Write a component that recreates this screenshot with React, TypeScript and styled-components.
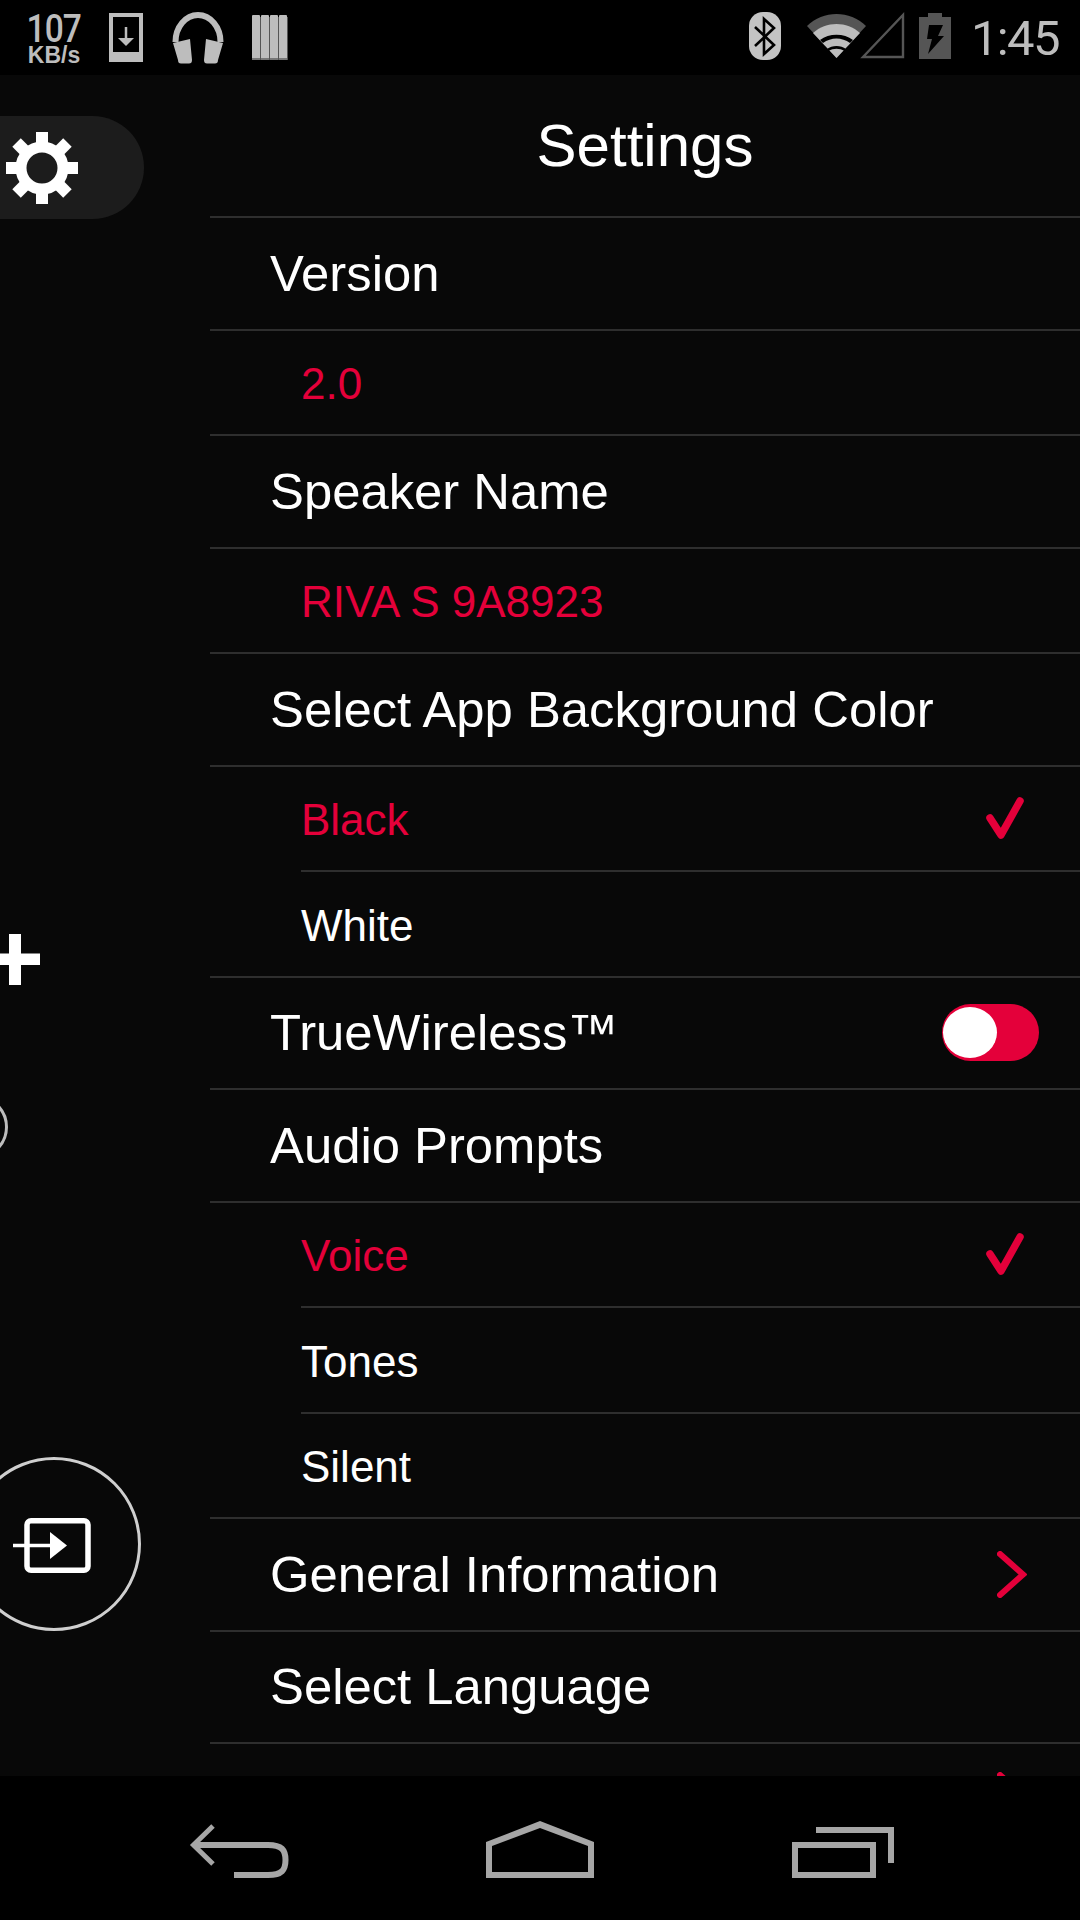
import React from "react";
import styled, { createGlobalStyle } from "styled-components";

const Global = createGlobalStyle`
  html, body { margin: 0; padding: 0; background: #000; }
  #root { width: 1080px; height: 1920px; }
`;

const RED = "#e4003a";
const LINE = "#2e2e2e";
const GREY = "#bdbdbd";
const NAV = "#a6a6a6";

const Phone = styled.div`
  width: 1080px; height: 1920px; display: flex; flex-direction: column;
  background: #000; overflow: hidden;
  font-family: "Liberation Sans", Arial, sans-serif;
`;
const StatusBar = styled.div`
  height: 75px; flex: none; display: flex; justify-content: space-between; background: #000; color: ${GREY};
`;
const StatusGroup = styled.div`display: flex; align-items: flex-start;`;
const Speed = styled.div`
  width: 54px; margin: 14px 0 0 27px; display: flex; flex-direction: column; align-items: center;
`;
const SpeedValue = styled.span`
  font: 500 39px/31px Roboto, sans-serif; transform: scaleX(.86); letter-spacing: -1px; white-space: nowrap;
`;
const SpeedUnit = styled.span`
  font: 700 23px/20px "Liberation Sans", sans-serif; white-space: nowrap;
`;
const StatusIcon = styled.svg<{ $left: number }>`
  display: block; margin-left: ${p => p.$left}px; flex: none;
`;
const Clock = styled.span`
  font: 400 49px/78px Roboto, sans-serif; margin: 0 21px 0 20px; letter-spacing: -1.6px;
`;

const Body = styled.div`flex: 1; min-height: 0; display: flex; background: #080808; overflow: hidden;`;
const Rail = styled.div`
  width: 210px; flex: none; display: flex; flex-direction: column; align-items: flex-start; overflow: hidden;
`;
const GearPill = styled.div`
  width: 144px; height: 103px; margin-top: 41px; background: #1c1c1c; border-radius: 0 52px 52px 0;
  display: flex; align-items: center; padding-left: 6px; box-sizing: border-box;
`;
const PlusIcon = styled.svg`display: block; margin: 715px 0 0 -10px;`;
const SmallRing = styled.div`
  width: 64px; height: 64px; margin: 110px 0 0 -56px; border: 3.5px solid ${GREY}; border-radius: 50%; box-sizing: border-box; flex: none;
`;
const InputRing = styled.div`
  width: 174px; height: 174px; flex: none; margin: 298px 0 0 -33px; border: 3px solid #cfcfcf; border-radius: 50%; box-sizing: border-box;
  display: flex; align-items: center; justify-content: center;
`;

const Panel = styled.div`flex: 1; min-width: 0; display: flex; flex-direction: column;`;
const Title = styled.div`
  height: 141px; flex: none; display: flex; align-items: center; justify-content: center;
  color: #fff; font-size: 60px;
`;
const Section = styled.div`
  flex: none; height: 112.5px; box-sizing: border-box; border-top: 2px solid ${LINE}; display: flex; align-items: center;
  justify-content: space-between; padding-left: 60px; color: #fff; font-size: 50.8px; white-space: nowrap;
`;
const SubRow = styled.div<{ $active?: boolean; $inset?: boolean }>`
  flex: none; height: 105.5px; box-sizing: border-box; display: flex; align-items: center; position: relative;
  justify-content: space-between; padding: 4px 0 0 91px; font-size: 44px; white-space: nowrap;
  color: ${p => (p.$active ? RED : "#fff")};
  border-top: 2px solid ${p => (p.$inset ? "transparent" : LINE)};
  ${p => p.$inset ? `&::before { content: ""; position: absolute; left: 91px; right: 0; top: -2px; height: 2px; background: ${LINE}; }` : ""}
`;
const CheckMark = styled.svg`display: block; flex: none; margin: -4px 55px 0 0;`;
const ChevronMark = styled.svg<{ $raised?: boolean }>`
  display: block; flex: none; margin: ${p => (p.$raised ? -8 : 0)}px 53px 0 0;
`;
const Toggle = styled.div`
  width: 97px; height: 57px; flex: none; margin-right: 41px; background: ${RED}; border-radius: 29px;
  display: flex; align-items: center; padding-left: 1px; box-sizing: border-box;
`;
const Knob = styled.div`width: 54px; height: 51px; border-radius: 50%; background: #fff;`;

const NavBar = styled.div`
  height: 144px; flex: none; background: #000; display: flex; align-items: flex-start; padding-top: 44px; box-sizing: border-box;
`;
const NavIcon = styled.svg<{ $left: number }>`display: block; flex: none; margin-left: ${p => p.$left}px;`;

const Check = () => (
  <CheckMark width="40" height="46" viewBox="0 0 40 46">
    <polyline points="5,23 16,40 35,6" fill="none" stroke={RED} strokeWidth="7.5" strokeLinecap="round" strokeLinejoin="round" />
  </CheckMark>
);
const Chevron = ({ raised }: { raised?: boolean }) => (
  <ChevronMark $raised={raised} width="30" height="47" viewBox="0 0 30 47">
    <polyline points="3,3 26,23.5 3,44" fill="none" stroke={RED} strokeWidth="6" strokeLinecap="round" />
  </ChevronMark>
);

const Gear = () => (
  <svg width="72" height="72" viewBox="-36 -36 72 72">
    {[0, 45, 90, 135, 180, 225, 270, 315].map(a => (
      <rect key={a} x="-6" y="-36" width="12" height="14" fill="#fff" transform={`rotate(${a})`} />
    ))}
    <circle r="21" fill="none" stroke="#fff" strokeWidth="11" />
  </svg>
);

export default function App() {
  return (
    <Phone>
      <Global />
      <StatusBar>
        <StatusGroup>
          <Speed>
            <SpeedValue>107</SpeedValue>
            <SpeedUnit>KB/s</SpeedUnit>
          </Speed>
          <StatusIcon $left={28} width="34" height="75" viewBox="0 0 34 75">
            <path d="M0 13h34v49H0z M4 17v35h26V17z" fill={GREY} fillRule="evenodd" />
            <path d="M17 27v12" stroke={GREY} strokeWidth="2.5" />
            <path d="M9 38h16l-8 8z" fill={GREY} />
          </StatusIcon>
          <StatusIcon $left={29} width="52" height="75" viewBox="0 0 52 75">
            <path d="M3.500 42A22.500 27 0 0 1 48.500 42" fill="none" stroke={GREY} strokeWidth="6" />
            <path d="M1 43 18 39l2 21q0 3.500-3 3.500H9q-3 0-3-3.500z" fill={GREY} />
            <path d="M51 43 34 39l-2 21q0 3.500 3 3.500h8q3 0 3-3.500z" fill={GREY} />
          </StatusIcon>
          <StatusIcon $left={28} width="36" height="75" viewBox="0 0 36 75">
            {[0, 9, 18, 27].map(x => (
              <g key={x}>
                <rect x={x} y="15" width="8" height="45" rx="1" fill={GREY} />
                <rect x={x} y="58" width="8" height="2" fill="#777" />
                <rect x={x + 8} y="17" width="1" height="43" fill="#555" />
              </g>
            ))}
          </StatusIcon>
        </StatusGroup>
        <StatusGroup>
          <StatusIcon $left={0} width="32" height="75" viewBox="0 0 32 75">
            <rect x="0" y="12" width="32" height="48" rx="14" fill="#c4c4c4" />
            <path d="M6 27l19 18-10 9V19l10 9-19 18" fill="none" stroke="#000" strokeWidth="2.600" />
          </StatusIcon>
          <StatusIcon $left={26} width="98" height="75" viewBox="0 0 98 75">
            <path d="M0 26C16 10 43 10 59 26L29.500 58z" fill="#555" />
            <path d="M6 33c13-12 34-12 47 0L29.500 58z" fill={GREY} />
            <path d="M13 40c9-7 24-7 33 0l-3 3c-8-6-19-6-27 0z" fill="#000" />
            <path d="M20 49c5-4 14-4 19 0l-1.500 2c-5-3-11-3-16 0z" fill="#000" />
            <path d="M56 57 96 15v42z" fill="none" stroke="#555" strokeWidth="2.400" />
          </StatusIcon>
          <StatusIcon $left={14} width="32" height="75" viewBox="0 0 32 75">
            <path d="M9 13h14v4h9v42H0V17h9z" fill="#555" />
            <path d="M10 25h14l-5 11h6L9 54l4-15H8z" fill="#000" />
          </StatusIcon>
          <Clock>1:45</Clock>
        </StatusGroup>
      </StatusBar>

      <Body>
        <Rail>
          <GearPill><Gear /></GearPill>
          <PlusIcon width="50" height="51" viewBox="0 0 50 51">
            <path d="M19 0h12v19.500h19v11.500H31V51H19V31H0V19.500h19z" fill="#fff" />
          </PlusIcon>
          <SmallRing />
          <InputRing>
            <svg width="82" height="60" viewBox="0 0 82 60">
              <rect x="14" y="6.750" width="61" height="49.500" rx="4" fill="none" stroke="#fff" strokeWidth="5.500" />
              <path d="M0 31.500h40" stroke="#fff" strokeWidth="3.500" />
              <path d="M37 18l17 13.500L37 45z" fill="#fff" />
            </svg>
          </InputRing>
        </Rail>
        <Panel>
          <Title>Settings</Title>
          <Section>Version</Section>
          <SubRow $active>2.0</SubRow>
          <Section>Speaker Name</Section>
          <SubRow $active>RIVA S 9A8923</SubRow>
          <Section>Select App Background Color</Section>
          <SubRow $active>Black<Check /></SubRow>
          <SubRow $inset>White</SubRow>
          <Section>TrueWireless™<Toggle><Knob /></Toggle></Section>
          <Section>Audio Prompts</Section>
          <SubRow $active>Voice<Check /></SubRow>
          <SubRow $inset>Tones</SubRow>
          <SubRow $inset>Silent</SubRow>
          <Section>General Information<Chevron /></Section>
          <Section>Select Language</Section>
          <Section><span /><Chevron raised /></Section>
        </Panel>
      </Body>

      <NavBar>
        <NavIcon $left={186} width="106" height="60" viewBox="0 0 106 60">
          <path d="M7.500 25H82C96 25 99.500 30 99.500 40S96 55 82 55H48" fill="none" stroke={NAV} strokeWidth="6" />
          <polyline points="27,6 7.500,25 27,44" fill="none" stroke={NAV} strokeWidth="5" />
        </NavIcon>
        <NavIcon $left={194} width="108" height="60" viewBox="0 0 108 60">
          <path d="M54 1 108 22V58H0V22z M54 8 102 26V52H6V26z" fill={NAV} fillRule="evenodd" />
        </NavIcon>
        <NavIcon $left={198} width="102" height="60" viewBox="0 0 102 60">
          <path d="M24 10H99V43" fill="none" stroke={NAV} strokeWidth="6" />
          <rect x="3" y="25" width="78" height="30" fill="none" stroke={NAV} strokeWidth="6" />
        </NavIcon>
      </NavBar>
    </Phone>
  );
}
